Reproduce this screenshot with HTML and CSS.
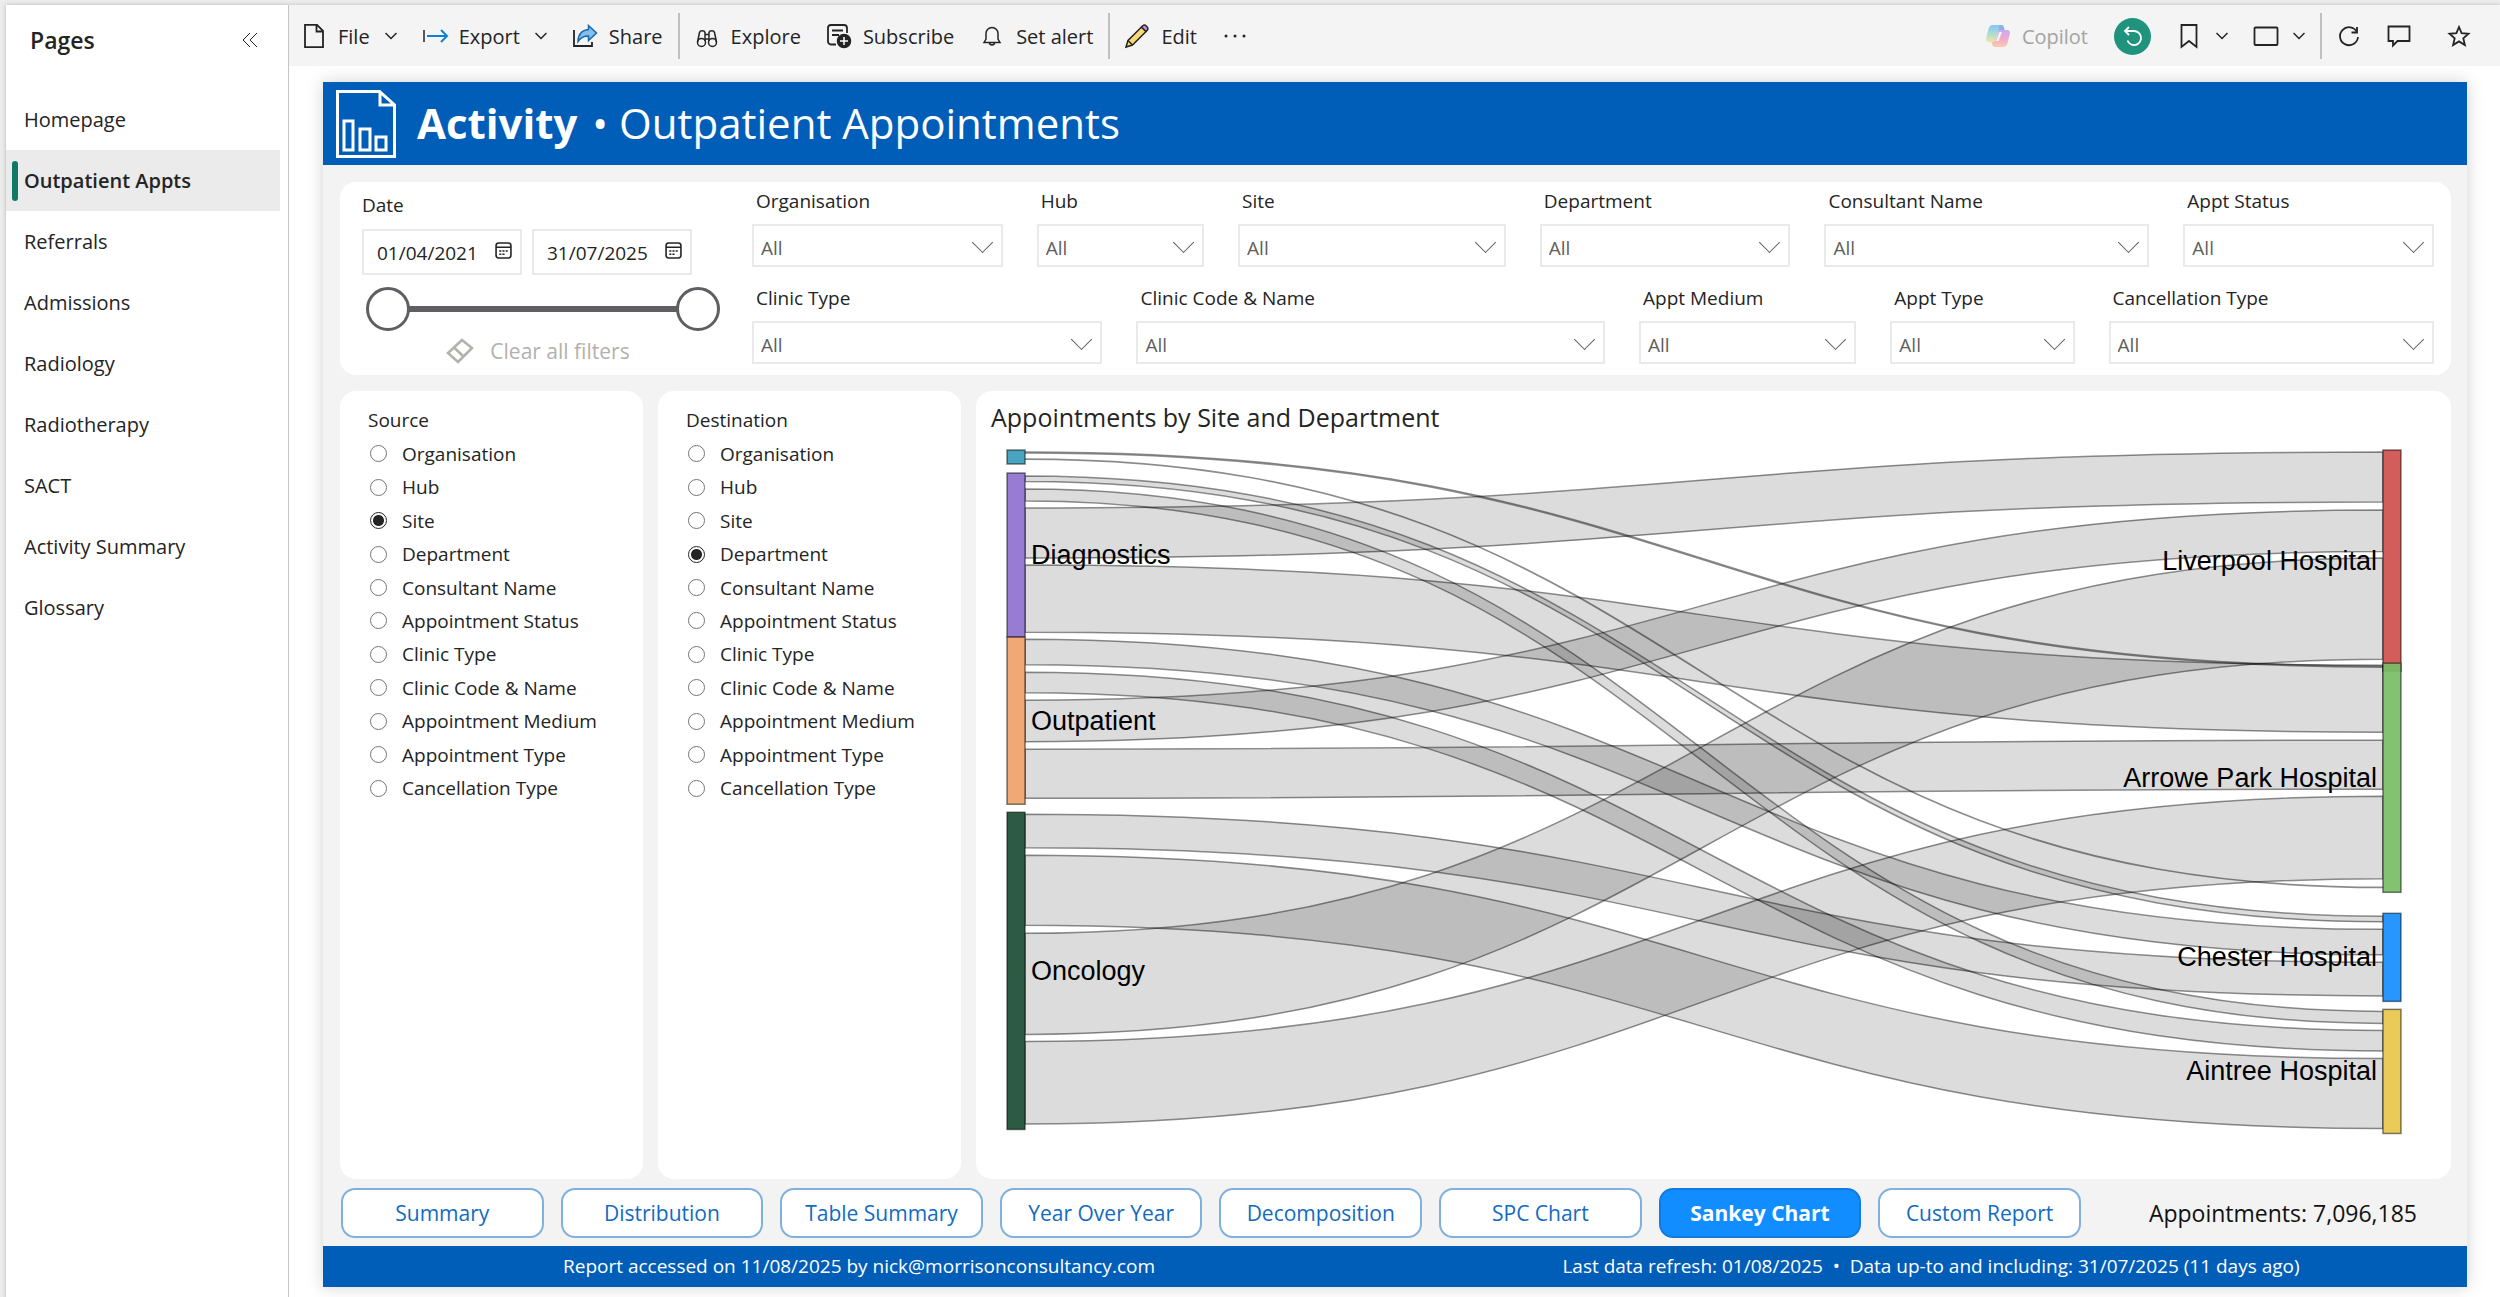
FILE: index.html
```html
<!DOCTYPE html>
<html lang="en">
<head>
  <meta charset="UTF-8" />
  <meta name="viewport" content="width=device-width, initial-scale=1.0"/>
  <title>Activity - Outpatient Appointments</title>
  <link rel="stylesheet" href="styles.css">
</head>
<body>

<aside class="sidebar">
  <div class="sidebar-head">
    <h2>Pages</h2>
    <button class="icon-btn" aria-label="Collapse pages">
      <svg width="16" height="16" viewBox="0 0 16 16"><path d="M8 1 1 8l7 7M15 1 8 8l7 7"/></svg>
    </button>
  </div>
  <nav class="pages">
    <a href="#">Homepage</a>
    <a href="#" class="current">Outpatient Appts</a>
    <a href="#">Referrals</a>
    <a href="#">Admissions</a>
    <a href="#">Radiology</a>
    <a href="#">Radiotherapy</a>
    <a href="#">SACT</a>
    <a href="#">Activity Summary</a>
    <a href="#">Glossary</a>
  </nav>
</aside>

<div class="content">

  <div class="toolbar">
    <div class="tool-group">
      <button class="tool">
        <svg class="icon" viewBox="0 0 24 24"><path stroke-width="1.8" d="M3 .9h12l6 6v16.2H3zM14.500 1v6.500H21"/></svg>
        File
        <svg class="caret" viewBox="0 0 12 8"><path d="m.5 1 5.500 5.500L11.500 1"/></svg>
      </button>
      <button class="tool">
        <svg class="icon" viewBox="0 0 24 24"><path d="M1 6v12"/><path class="blue" d="M4 12h20M18 6l6 6-6 6"/></svg>
        Export
        <svg class="caret" viewBox="0 0 12 8"><path d="m.5 1 5.500 5.500L11.500 1"/></svg>
      </button>
      <button class="tool">
        <svg class="icon" viewBox="0 0 24 24"><path stroke-width="1.8" d="M1 6v16h18v-4"/><path fill="#83beec" stroke="#1769aa" d="M15.500 1.500 23.500 9l-8 7.500v-4.500c-5 0-8 1.500-10.500 5.500 0-7 4-11.500 10.500-12z"/></svg>
        Share
      </button>
    </div>
    <span class="sep"></span>
    <div class="tool-group">
      <button class="tool">
        <svg class="icon" viewBox="0 0 24 24"><circle cx="6.500" cy="18.500" r="4"/><circle cx="17.500" cy="18.500" r="4"/><path d="M2.500 18 4.500 8.500C5 6 9.500 6 10 8.500V17M21.500 18l-2-9.500C19 6 14.500 6 14 8.500V17M10 10.500h4M10 15h4"/></svg>
        Explore
      </button>
      <button class="tool">
        <svg class="icon" viewBox="0 0 24 24"><path stroke-width="1.800" d="M9 20.500H4A3 3 0 0 1 1 17.500V4a3 3 0 0 1 3-3h13a3 3 0 0 1 3 3v5M5 6.500h11M5 11h7"/><circle cx="17" cy="17" r="6.500" fill="#242424"/><path stroke="#fff" d="M17 13v8M13 17h8"/></svg>
        Subscribe
      </button>
      <button class="tool">
        <svg class="icon" viewBox="0 0 24 24"><path d="M4 18.500h16l-2-3.500V9.500a6 6 0 0 0-12 0V15zM9.500 18.500a2.500 2.500 0 0 0 5 0"/></svg>
        Set alert
      </button>
    </div>
    <span class="sep"></span>
    <div class="tool-group">
      <button class="tool">
        <svg class="icon" viewBox="0 0 24 24"><path fill="#fad779" d="M1 23 3 16.500 16.500 3l4.500 4.500L7.500 21z"/><path fill="#c98fd9" d="m16.500 3 1.500-1.500c2-1.500 6 2 4.500 4.500L21 7.500z"/><path d="m3 16.500 4.500 4.500"/></svg>
        Edit
      </button>
      <button class="tool" aria-label="More options">
        <svg class="icon" viewBox="0 0 24 24"><g class="dots"><circle cx="3" cy="12" r="1.500"/><circle cx="12" cy="12" r="1.500"/><circle cx="21" cy="12" r="1.500"/></g></svg>
      </button>
    </div>

    <div class="tool-group tools-right">
      <button class="tool" disabled>
        <svg class="icon copilot" viewBox="0 0 24 24">
          <defs>
            <linearGradient id="cpA" x1="0" y1="0" x2="0" y2="1"><stop offset="0" stop-color="#86c5f5"/><stop offset=".5" stop-color="#a9dcd3"/><stop offset="1" stop-color="#f3e4a0"/></linearGradient>
            <linearGradient id="cpB" x1="0" y1="0" x2="0" y2="1"><stop offset="0" stop-color="#c9a9ee"/><stop offset=".5" stop-color="#f0a9cf"/><stop offset="1" stop-color="#fbcbb0"/></linearGradient>
          </defs>
          <path fill="url(#cpA)" d="M7 1h8c2 0 2.500 1 3 3l.5 2h-3c-2 0-3 1-3.500 3l-2 6c-.5 2-1.500 3-3.500 3H3c-2.500 0-3.500-2-2.500-5l2-8C3.500 2 4.500 1 7 1z"/>
          <path fill="#8fb0ec" d="M13 1h2c2 0 2.500 1 3 3l.5 2h-3c-1.500 0-2.500.5-3 2z"/>
          <path fill="url(#cpB)" d="M17 23H9c-2 0-2.500-1-3-3l-.5-2h1c2 0 3-1 3.500-3l2-6c.5-2 1.500-3 3.500-3H21c2.500 0 3.500 2 2.500 5l-2 8c-1 3-2 4-4.500 4z"/>
          <path fill="#f5f5f5" d="M13.500 8h2.500l-3.500 9H10z"/>
        </svg>
        Copilot
      </button>
      <button class="reset" aria-label="Reset filters">
        <svg class="icon" viewBox="0 0 24 24"><path d="M8 3 4 7l4 4M4 7h9a7 7 0 1 1-6.500 9.500"/></svg>
      </button>
      <button class="tool" aria-label="Bookmarks">
        <svg class="icon" viewBox="0 0 24 24"><path stroke-width="1.800" d="M4.500 1h15v22L12 17l-7.500 6z"/></svg>
        <svg class="caret" viewBox="0 0 12 8"><path d="m.5 1 5.500 5.500L11.500 1"/></svg>
      </button>
      <button class="tool" aria-label="View">
        <svg class="icon" viewBox="0 0 24 24"><rect stroke-width="1.800" x="0.500" y="3.500" width="23" height="17.500" rx="1"/></svg>
        <svg class="caret" viewBox="0 0 12 8"><path d="m.5 1 5.500 5.500L11.500 1"/></svg>
      </button>
    </div>
    <span class="sep"></span>
    <div class="tool-group">
      <button class="tool" aria-label="Refresh">
        <svg class="icon" viewBox="0 0 24 24"><path stroke-width="1.800" d="M20 8A9 9 0 1 0 21 13M20 3v5.500h-5.500"/></svg>
      </button>
      <button class="tool" aria-label="Comment">
        <svg class="icon" viewBox="0 0 24 24"><path stroke-width="1.800" d="M1.500 2.500h21v14.500h-12L6 21.500V17H1.500z"/></svg>
      </button>
    </div>
    <button class="tool favourite" aria-label="Favourite">
      <svg class="icon" viewBox="0 0 24 24"><path stroke-width="1.800" d="m12 3 2.600 6.200 6.900.6-5.200 4.500 1.600 6.700L12 17.400 6.100 21l1.600-6.700-5.200-4.500 6.900-.6z"/></svg>
    </button>
  </div>

  <main class="report">
    <header class="report-head">
      <svg width="60" height="68" viewBox="0 0 60 68"><path d="M1.500 1.500h42L58.500 15v51.500h-57zM44 1.500V15h14.500M8 31h9v29H8zM24 39h10v21H24zM40 47h10v13H40z"/></svg>
      <h1><b>Activity</b> • Outpatient Appointments</h1>
    </header>

    <div class="report-body">
      <section class="card filters">
        <div class="date-filter">
          <label for="date-from">Date</label>
          <div class="dates">
            <div class="date-box">
              <input id="date-from" type="text" value="01/04/2021">
              <svg width="17" height="17" viewBox="0 0 16 16"><rect x="1" y="1" width="14" height="14" rx="2.500"/><path d="M1 5h14M4 8.500h2M7 8.500h2M10 8.500h2M4 11.500h2M7 11.500h2"/></svg>
            </div>
            <div class="date-box">
              <input type="text" aria-label="Date to" value="31/07/2025">
              <svg width="17" height="17" viewBox="0 0 16 16"><rect x="1" y="1" width="14" height="14" rx="2.500"/><path d="M1 5h14M4 8.500h2M7 8.500h2M10 8.500h2M4 11.500h2M7 11.500h2"/></svg>
            </div>
          </div>
          <div class="slider">
            <input type="range" aria-label="Start date" min="0" max="100" value="0">
            <input type="range" aria-label="End date" min="0" max="100" value="100">
          </div>
          <button class="clear" disabled>
            <svg width="28" height="28" viewBox="0 0 28 28"><path d="M16 3 26 11 12 25 2 16zM8 10.500 17.500 19.500"/></svg>
            Clear all filters
          </button>
        </div>

        <div class="slicers">
          <div class="slicer-row row-one">
            <div class="slicer"><label for="f-org">Organisation</label><div class="pick"><select id="f-org"><option>All</option></select></div></div>
            <div class="slicer"><label for="f-hub">Hub</label><div class="pick"><select id="f-hub"><option>All</option></select></div></div>
            <div class="slicer"><label for="f-site">Site</label><div class="pick"><select id="f-site"><option>All</option></select></div></div>
            <div class="slicer"><label for="f-dept">Department</label><div class="pick"><select id="f-dept"><option>All</option></select></div></div>
            <div class="slicer"><label for="f-cons">Consultant Name</label><div class="pick"><select id="f-cons"><option>All</option></select></div></div>
            <div class="slicer"><label for="f-status">Appt Status</label><div class="pick"><select id="f-status"><option>All</option></select></div></div>
          </div>
          <div class="slicer-row row-two">
            <div class="slicer"><label for="f-ctype">Clinic Type</label><div class="pick"><select id="f-ctype"><option>All</option></select></div></div>
            <div class="slicer"><label for="f-code">Clinic Code &amp; Name</label><div class="pick"><select id="f-code"><option>All</option></select></div></div>
            <div class="slicer"><label for="f-medium">Appt Medium</label><div class="pick"><select id="f-medium"><option>All</option></select></div></div>
            <div class="slicer"><label for="f-atype">Appt Type</label><div class="pick"><select id="f-atype"><option>All</option></select></div></div>
            <div class="slicer"><label for="f-cancel">Cancellation Type</label><div class="pick"><select id="f-cancel"><option>All</option></select></div></div>
          </div>
        </div>
      </section>

      <div class="panels">
        <fieldset class="card options">
          <legend>Source</legend>
          <div class="option-list">
            <label><input type="radio" name="source">Organisation</label>
            <label><input type="radio" name="source">Hub</label>
            <label><input type="radio" name="source" checked>Site</label>
            <label><input type="radio" name="source">Department</label>
            <label><input type="radio" name="source">Consultant Name</label>
            <label><input type="radio" name="source">Appointment Status</label>
            <label><input type="radio" name="source">Clinic Type</label>
            <label><input type="radio" name="source">Clinic Code &amp; Name</label>
            <label><input type="radio" name="source">Appointment Medium</label>
            <label><input type="radio" name="source">Appointment Type</label>
            <label><input type="radio" name="source">Cancellation Type</label>
          </div>
        </fieldset>

        <fieldset class="card options">
          <legend>Destination</legend>
          <div class="option-list">
            <label><input type="radio" name="destination">Organisation</label>
            <label><input type="radio" name="destination">Hub</label>
            <label><input type="radio" name="destination">Site</label>
            <label><input type="radio" name="destination" checked>Department</label>
            <label><input type="radio" name="destination">Consultant Name</label>
            <label><input type="radio" name="destination">Appointment Status</label>
            <label><input type="radio" name="destination">Clinic Type</label>
            <label><input type="radio" name="destination">Clinic Code &amp; Name</label>
            <label><input type="radio" name="destination">Appointment Medium</label>
            <label><input type="radio" name="destination">Appointment Type</label>
            <label><input type="radio" name="destination">Cancellation Type</label>
          </div>
        </fieldset>

        <section class="card chart">
          <h3>Appointments by Site and Department</h3>
          <svg id="sankey" viewBox="0 0 1474 738"></svg>
        </section>
      </div>

      <div class="bottom-bar">
        <nav class="tabs">
          <button>Summary</button>
          <button>Distribution</button>
          <button>Table Summary</button>
          <button>Year Over Year</button>
          <button>Decomposition</button>
          <button>SPC Chart</button>
          <button class="active">Sankey Chart</button>
          <button>Custom Report</button>
        </nav>
        <span class="total">Appointments: 7,096,185</span>
      </div>
    </div>

    <footer class="report-foot">
      <span>Report accessed on 11/08/2025 by nick@morrisonconsultancy.com</span>
      <span>Last data refresh: 01/08/2025 &nbsp;•&nbsp; Data up-to and including: 31/07/2025 (11 days ago)</span>
    </footer>
  </main>
</div>

<script src="sankey.js"></script>
</body>
</html>
```
FILE: styles.css
```css
* {
  box-sizing: border-box;
}

html, body {
  margin: 0;
  padding: 0;
}

body {
  display: flex;
  min-height: 100vh;
  padding: 5px 0 0 6px;
  background: #ececec;
  color: #242424;
  font-family: 'Segoe UI', 'Open Sans', sans-serif;
  font-size: 19px;
}

button, input, select {
  font: inherit;
  color: inherit;
}

button {
  padding: 0;
  border: 0;
  background: none;
  cursor: pointer;
}

h1, h2, h3 {
  margin: 0;
}

svg {
  fill: none;
  stroke: #242424;
  stroke-width: 1.5;
}

/* pages list */
.sidebar {
  width: 283px;
  flex-shrink: 0;
  background: #fff;
  border-right: 1px solid #c4c4c4;
  box-shadow: 0 0 4px rgba(0, 0, 0, 0.25);
}

.sidebar-head {
  display: flex;
  align-items: center;
  justify-content: space-between;
  height: 84px;
  padding: 0 30px 14px 24px;
}

.sidebar-head h2 {
  font-size: 23px;
  font-weight: 600;
}

.sidebar-head svg {
  display: block;
  stroke-width: 1;
}

.pages a {
  display: flex;
  align-items: center;
  height: 61px;
  margin-right: 8px;
  padding-left: 18px;
  color: #242424;
  font-size: 20px;
  text-decoration: none;
}

.pages .current {
  padding-left: 6px;
  background: #ebebeb;
  font-weight: 600;
}

.pages .current::before {
  content: "";
  width: 6px;
  height: 40px;
  margin-right: 6px;
  border-radius: 3px;
  background: #117865;
}

/* top toolbar */
.content {
  display: flex;
  flex: 1;
  flex-direction: column;
  min-width: 0;
  background: #fff;
}

.toolbar {
  display: flex;
  align-items: center;
  height: 61px;
  padding: 1px 29px 0 13px;
  background: #f4f4f4;
  box-shadow: 0 0 4px rgba(0, 0, 0, 0.2);
  font-size: 20px;
  clip-path: inset(-4px 0 0 0);
}

.tool-group {
  display: flex;
  align-items: center;
  gap: 26px;
}

.tool {
  display: flex;
  align-items: center;
  gap: 12px;
}

.tool:disabled {
  color: #a3a3a3;
}

.icon {
  width: 24px;
  height: 24px;
  overflow: visible;
}

.icon .blue {
  stroke: #0f7fd6;
  stroke-width: 2;
}

.copilot,
.dots {
  stroke: none;
}

.dots {
  fill: #242424;
}

.caret {
  width: 12px;
  height: 8px;
  margin-left: 3px;
}

.sep {
  width: 2px;
  height: 46px;
  margin: 0 15px;
  background: #c2c0be;
}

.tools-right {
  margin-left: auto;
}

.reset {
  display: flex;
  align-items: center;
  justify-content: center;
  width: 37px;
  height: 37px;
  border-radius: 50%;
  background: #1f937d;
}

.reset .icon {
  stroke: #fff;
  stroke-width: 1.8;
}

.favourite {
  margin-left: 36px;
}

/* report page */
.report {
  display: flex;
  flex: 1;
  flex-direction: column;
  margin: 16px 33px 11px 34px;
  background: #f3f3f3;
  box-shadow: 0 0 16px rgba(0, 0, 0, 0.18);
}

.report-head {
  display: flex;
  align-items: center;
  gap: 21px;
  height: 83px;
  padding-left: 13px;
  background: #005eb8;
  color: #fff;
}

.report-head svg {
  stroke: #fff;
  stroke-width: 3;
}

.report-head h1 {
  padding-bottom: 3px;
  font-size: 42px;
  font-weight: 400;
}

.report-head b {
  margin-right: 4px;
}

.report-body {
  display: flex;
  flex: 1;
  flex-direction: column;
  padding: 17px 16px 7px 17px;
}

.card {
  margin: 0;
  border: 0;
  border-radius: 16px;
  background: #fff;
}

.filters {
  display: flex;
  gap: 32px;
  height: 193px;
  padding: 0 17px 0 22px;
}

.date-filter {
  display: flex;
  flex-direction: column;
  width: 358px;
  padding-top: 10px;
}

.date-filter label,
.slicer label {
  height: 26px;
  line-height: 26px;
}

.dates {
  display: flex;
  gap: 10px;
  margin-top: 11px;
}

.date-box {
  display: flex;
  align-items: center;
  width: 160px;
  height: 46px;
  padding: 2px 8px 0 13px;
  border: 2px solid #eaeaea;
}

.date-box input {
  width: 100%;
  min-width: 0;
  padding: 0;
  border: 0;
  outline: 0;
  background: none;
}

.date-box svg {
  flex-shrink: 0;
  margin-bottom: 6px;
}

.slider {
  display: grid;
  height: 44px;
  margin: 12px 0 0 4px;
  background: linear-gradient(#605e62, #605e62) no-repeat center / 80% 6px;
}

/* both handles share one track */
.slider input {
  grid-area: 1 / 1;
  width: 100%;
  height: 44px;
  margin: 0;
  appearance: none;
  background: none;
  pointer-events: none;
}

.slider input::-webkit-slider-thumb {
  appearance: none;
  width: 44px;
  height: 44px;
  border: 3px solid #605e62;
  border-radius: 50%;
  background: #fff;
  pointer-events: auto;
}

.clear {
  display: flex;
  align-items: center;
  align-self: center;
  gap: 16px;
  margin: 6px 6px 0 0;
  font-size: 21px;
}

.clear:disabled {
  color: #b3b0ad;
}

.clear svg {
  stroke: #b3b0ad;
  stroke-width: 2.5;
}

.slicers {
  flex: 1;
  padding-top: 6px;
}

.slicer-row {
  display: grid;
  gap: 34px;
  height: 97px;
}

.row-one {
  grid-template-columns: 250fr 167fr 267fr 250fr 324fr 250fr;
}

.row-two {
  grid-template-columns: 350fr 468fr 217fr 184fr 325fr;
}

.slicer label {
  display: block;
  padding-left: 4px;
}

.pick {
  position: relative;
  margin-top: 10px;
}

.pick select {
  display: block;
  width: 100%;
  height: 43px;
  padding: 5px 8px 0 7px;
  border: 2px solid #eaeaea;
  border-radius: 0;
  appearance: none;
  background: #fff;
  color: #605e5c;
}

.pick::after {
  content: "";
  position: absolute;
  top: 11px;
  right: 13px;
  width: 14px;
  height: 14px;
  border: solid #605e5c;
  border-width: 0 1px 1px 0;
  transform: rotate(45deg);
  pointer-events: none;
}

/* radio panels and chart */
.panels {
  display: flex;
  flex: 1;
  gap: 15px;
  margin-top: 16px;
}

.options {
  width: 303px;
  min-width: 0;
  padding: 16px 0 0 28px;
}

.options legend {
  float: left;
  width: 100%;
  margin-bottom: 4px;
  padding: 0;
  line-height: 26px;
}

.option-list {
  display: grid;
  grid-auto-rows: 1fr;
  clear: both;
  height: 368px;
}

.option-list label {
  display: flex;
  align-items: center;
  gap: 15px;
}

.option-list input {
  width: 17px;
  height: 17px;
  margin: 0 0 0 2px;
  border: 1px solid #757575;
  border-radius: 50%;
  appearance: none;
}

.option-list input:checked {
  border-color: #242424;
  background: radial-gradient(circle, #242424 5px, #fff 6px);
}

.chart {
  flex: 1;
  min-width: 0;
}

.chart h3 {
  height: 49px;
  padding-left: 15px;
  font-size: 25px;
  font-weight: 400;
  line-height: 52px;
}

#sankey {
  display: block;
  width: 100%;
}

#sankey .link {
  fill: rgba(0, 0, 0, 0.137);
  stroke: rgba(0, 0, 0, 0.44);
}

#sankey .node {
  stroke: rgba(0, 0, 0, 0.5);
}

#sankey text {
  fill: #000;
  stroke: none;
  font-family: 'Liberation Sans', Arial, sans-serif;
  font-size: 27px;
}

/* view tabs */
.bottom-bar {
  display: flex;
  align-items: center;
  gap: 68px;
  margin-top: 9px;
  padding: 0 34px 1px 1px;
}

.tabs {
  display: grid;
  flex: 1;
  grid-template-columns: repeat(8, 1fr);
  gap: 17px;
}

.tabs button {
  height: 50px;
  border: 2px solid #7fb0de;
  border-radius: 14px;
  background: #fff;
  color: #126bc0;
  font-size: 21px;
}

.tabs .active {
  border-color: #117bdf;
  background: #118dff;
  color: #fff;
  font-weight: 700;
}

.total {
  color: #111;
  font-size: 23px;
}

.report-foot {
  display: grid;
  grid-template-columns: 1fr 1fr;
  align-items: center;
  height: 41px;
  background: #005eb8;
  color: #fff;
  font-size: 19px;
  text-align: center;
}
```
FILE: sankey.js
```js
const svg = document.getElementById("sankey");
const NS = "http://www.w3.org/2000/svg";
const LEFT = 31, RIGHT = 1406, NODE_W = 18;

// [side, name, color, top, bottom]
const nodes = [
  ["left", "", "#4aa3bf", 10, 24],
  ["left", "Diagnostics", "#987cd4", 33, 197],
  ["left", "Outpatient", "#f0a875", 197, 364],
  ["left", "Oncology", "#2d5a43", 372, 689],
  ["right", "Liverpool Hospital", "#d25d5a", 10, 231],
  ["right", "Arrowe Park Hospital", "rgba(120, 189, 102, 0.93)", 223, 452],
  ["right", "Chester Hospital", "#2797ff", 473, 561],
  ["right", "Aintree Hospital", "#ebcb58", 569, 693]
];

// [top at source, top at target, thickness]
const links = [
  [12, 226, 1],
  [19, 447, 0.2],
  [36, 476, 5.5],
  [49, 571, 12],
  [68, 12, 50],
  [125, 225, 67],
  [199, 489, 25.5],
  [232, 590, 20.5],
  [260, 70, 41.5],
  [309, 300, 49],
  [374, 522, 33.5],
  [415, 618, 70],
  [493, 118, 101],
  [601, 356, 82.5]
];

function add(tag, attrs) {
  const el = document.createElementNS(NS, tag);
  for (const key in attrs) el.setAttribute(key, attrs[key]);
  svg.appendChild(el);
  return el;
}

const x0 = LEFT + NODE_W;
const x1 = RIGHT;
const mid = (x0 + x1) / 2;

links.forEach(([a, b, h]) => {
  add("path", {
    class: "link",
    d: `M${x0} ${a}C${mid} ${a} ${mid} ${b} ${x1} ${b}V${b + h}C${mid} ${b + h} ${mid} ${a + h} ${x0} ${a + h}Z`
  });
});

nodes.forEach(([side, name, color, top, bottom]) => {
  const isLeft = side === "left";
  add("rect", {
    class: "node",
    x: isLeft ? LEFT : RIGHT,
    y: top,
    width: NODE_W,
    height: bottom - top,
    fill: color
  });
  if (!name) return;
  const label = add("text", {
    x: isLeft ? x0 + 6 : x1 - 6,
    y: (top + bottom) / 2 + 9,
    "text-anchor": isLeft ? "start" : "end"
  });
  label.textContent = name;
});
```
